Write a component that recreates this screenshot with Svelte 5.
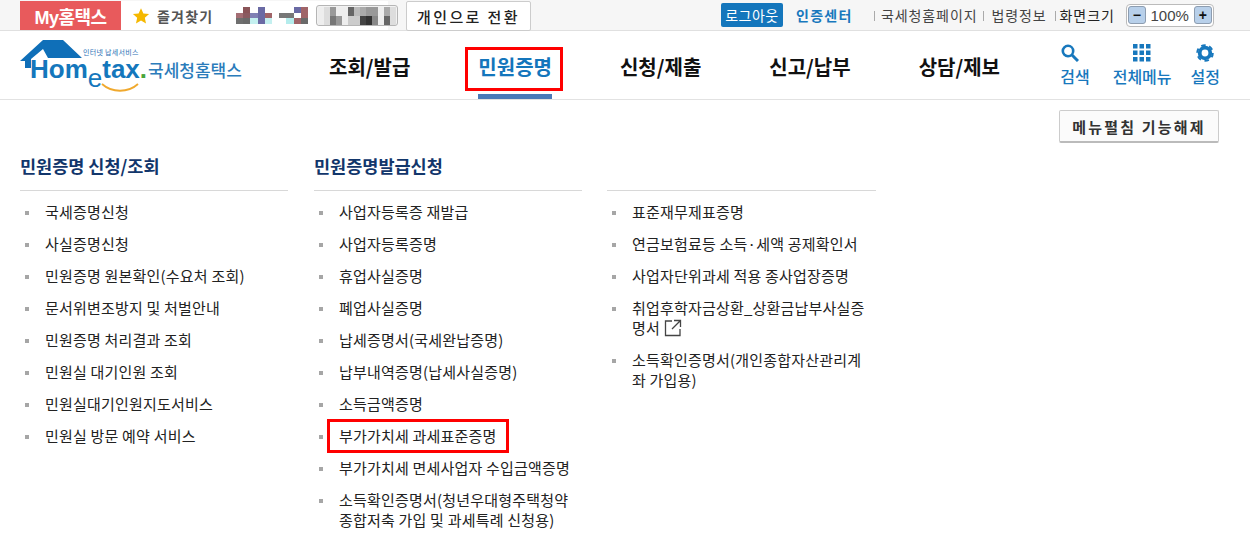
<script>
  // blurred account name, drawn as blocks like in the capture
  const mosaic = [
    '#fff', '#8a5458', '#fff', '#6a6aa4', '#fff', '#fff', '#fff', '#fff', '#6a6aa4', '#a06468',
    '#a46e74', '#8a5a60', '#8080b4', '#6a6aa4', '#a06468', '#fff', '#777', '#777', '#fff', '#a06468',
    '#6f6f6f', '#6a6a6a', '#c4f0f0', '#6a6aa4', '#c4f0f0', '#fff', '#fff', '#b4ecec', '#a06468', '#6a6a6a'
  ]
  const chip = [
    '#eee', '#ddd', '#999', '#eee', '#eee', '#666', '#bbb', '#aaa', '#999', '#999', '#eee', '#aaa', '#ddd',
    '#eee', '#ddd', '#777', '#999', '#eee', '#ccc', '#ccc', '#444', '#333', '#888', '#eee', '#666', '#ddd'
  ]
  const nav = ['조회/발급', '민원증명', '신청/제출', '신고/납부', '상담/제보']
  const columns = [
    {
      title: '민원증명 신청/조회',
      items: ['국세증명신청', '사실증명신청', '민원증명 원본확인(수요처 조회)', '문서위변조방지 및 처벌안내', '민원증명 처리결과 조회', '민원실 대기인원 조회', '민원실대기인원지도서비스', '민원실 방문 예약 서비스']
    },
    {
      title: '민원증명발급신청',
      items: ['사업자등록증 재발급', '사업자등록증명', '휴업사실증명', '폐업사실증명', '납세증명서(국세완납증명)', '납부내역증명(납세사실증명)', '소득금액증명', '부가가치세 과세표준증명', '부가가치세 면세사업자 수입금액증명', '소득확인증명서(청년우대형주택청약\n종합저축 가입 및 과세특례 신청용)']
    },
    {
      title: '',
      items: ['표준재무제표증명', '연금보험료등 소득·세액 공제확인서', '사업자단위과세 적용 종사업장증명', '취업후학자금상환_상환금납부사실증\n명서', '소득확인증명서(개인종합자산관리계\n좌 가입용)']
    }
  ]
</script>

<div class="page">
  <div class="topbar">
    <a class="my">My홈택스</a>
    <a class="fav">
      <svg width="18" height="18" viewBox="0 0 24 24"><path fill="#f5b800" d="M12 1.500l3.200 7 7.600.8-5.700 5.100 1.600 7.500L12 18l-6.700 3.900 1.600-7.500L1.200 9.300l7.600-.8z"/></svg>
      즐겨찾기
    </a>
    <div class="who">
      <div class="pixels">
        {#each mosaic as c}
          <i style="background:{c}"></i>
        {/each}
      </div>
      <div class="chip">
        {#each chip as c}
          <i style="background:{c}"></i>
        {/each}
      </div>
    </div>
    <button class="switch">개인으로 전환</button>
    <div class="util">
      <a class="logout">로그아웃</a>
      <a class="cert">인증센터</a>
      <a class="link first">국세청홈페이지</a>
      <a class="link second">법령정보</a>
      <span class="link third">화면크기</span>
      <div class="zoom">
        <span class="zbtn">−</span>
        <span class="pct">100%</span>
        <span class="zbtn">+</span>
      </div>
    </div>
  </div>

  <header>
    <div class="logo">
      <svg class="roof" width="64" height="30" viewBox="0 0 64 30"><path fill="#0f6fb8" d="M0 21L23 0h20l19 18H28l-5-9L11 19v9H5v-7z"/></svg>
      <span class="tagline">인터넷 납세서비스</span>
      <span class="wordmark">Hom<em>e</em>tax<b>.</b></span>
      <span class="logo-ko">국세청홈택스</span>
      <svg class="smile" width="38" height="9" viewBox="0 0 38 9"><path d="M1 1c10 9 26 9 36 0" fill="none" stroke="#f0a92e" stroke-width="1.800"/></svg>
    </div>
    <nav>
      {#each nav as n, i}
        <a class:active={i === 1}>{n}</a>
      {/each}
    </nav>
    <div class="tools">
      <a class="search">
        <svg width="18" height="18" viewBox="0 0 18 18"><circle cx="7" cy="7" r="5.200" fill="none" stroke="#1878bd" stroke-width="2.600"/><path d="M10.500 10.500L17 17" stroke="#1878bd" stroke-width="3"/></svg>
        검색
      </a>
      <a>
        <svg width="18" height="18" viewBox="0 0 18 18" fill="#1878bd">
          {#each [0, 6.500, 13] as y}
            {#each [0, 6.500, 13] as x}
              <rect {x} {y} width="4.500" height="4.500"/>
            {/each}
          {/each}
        </svg>
        전체메뉴
      </a>
      <a class="gear">
        <svg width="18" height="18" viewBox="0 0 18 18" fill="none" stroke="#1878bd"><circle cx="9" cy="9" r="5.300" stroke-width="3.800"/><circle cx="9" cy="9" r="7.800" stroke-width="2" stroke-dasharray="4.500 3.670"/></svg>
        설정
      </a>
    </div>
  </header>

  <div class="actions">
    <button class="unfold">메뉴펼침 기능해제</button>
  </div>

  <main>
    {#each columns as col}
      <section>
        <h3>{col.title}</h3>
        <ul>
          {#each col.items as item}
            <li>
              {#if item === '부가가치세 과세표준증명'}
                <span class="marked">{item}</span>
              {:else}
                {item}
              {/if}
              {#if item.startsWith('취업후')}
                <svg class="ext" width="18" height="18" viewBox="0 0 18 18"><path d="M8 2H1.500v14.500H16V10M10 1.500h6.500V8M16 2L8 10" fill="none" stroke="#444" stroke-width="1.300"/></svg>
              {/if}
            </li>
          {/each}
        </ul>
      </section>
    {/each}
  </main>
</div>

<style>
  :global(body) {
    background: #fff;
  }
  .page {
    width: 1250px;
    height: 553px;
    overflow: hidden;
    font-family: "Noto Sans CJK KR", "Liberation Sans", sans-serif;
    color: #222;
  }
  a {
    color: inherit;
    text-decoration: none;
  }
  button {
    font-family: inherit;
    cursor: pointer;
  }

  .topbar {
    height: 30px;
    padding-left: 20px;
    display: flex;
    background: #f6f6f6;
    border-bottom: 1px solid #e0e0e0;
  }
  .my {
    width: 101px;
    height: 29px;
    margin-top: 1px;
    display: flex;
    align-items: center;
    justify-content: center;
    background: #e85a5c;
    color: #fff;
    font: bold 18px "Liberation Sans", "Noto Sans CJK KR", sans-serif;
    letter-spacing: -0.5px;
    white-space: nowrap;
  }
  .fav {
    width: 103px;
    height: 29px;
    margin-top: 1px;
    display: flex;
    align-items: center;
    gap: 7px;
    padding-left: 11px;
    background: #fff;
    box-sizing: border-box;
    font-size: 14px;
    font-weight: 700;
    color: #555;
    letter-spacing: 1.200px;
    white-space: nowrap;
  }
  .who {
    width: 174px;
    height: 29px;
    display: flex;
    align-items: center;
    padding-left: 12px;
    box-sizing: border-box;
    margin-top: 1px;
    background: linear-gradient(to right, #fff 164px, #f6f6f6 164px);
  }
  .pixels {
    display: grid;
    grid-template-columns: repeat(10, 1fr);
    grid-auto-rows: 5.400px;
    width: 72px;
    margin-right: 8px;
    flex-shrink: 0;
  }
  .chip {
    display: grid;
    grid-template-columns: repeat(13, 1fr);
    grid-auto-rows: 9px;
    width: 82px;
    height: 21px;
    padding: 1px;
    box-sizing: border-box;
    background: #f2f2f2;
    border: 1px solid #b5b5b5;
    border-radius: 3px;
    flex-shrink: 0;
  }
  .switch {
    width: 125px;
    height: 30px;
    margin: 1px 0 0 8px;
    padding: 0;
    background: #fff;
    border: 1px solid #ccc;
    border-radius: 2px;
    font-size: 15px;
    font-weight: 500;
    letter-spacing: 2.400px;
    color: #222;
  }
  .util {
    display: flex;
    align-items: center;
    margin-left: 190px;
    height: 30px;
  }
  .logout {
    width: 62px;
    height: 24px;
    line-height: 24px;
    text-align: center;
    background: #1476bc;
    color: #fff;
    border-radius: 2px;
    font-size: 14px;
    letter-spacing: 0.5px;
    white-space: nowrap;
  }
  .cert {
    margin-left: 13px;
    color: #1878bd;
    font-weight: 700;
    width: 78px;
    font-size: 14px;
    letter-spacing: 1.300px;
    white-space: nowrap;
  }
  .link {
    color: #444;
    font-size: 14px;
    letter-spacing: 0.9px;
    position: relative;
    white-space: nowrap;
  }
  .link::before {
    content: "";
    position: absolute;
    left: 0;
    top: 6px;
    height: 10px;
    width: 1px;
    background: #aaa;
  }
  .first {
    padding-left: 7px;
  }
  .second {
    margin-left: 6px;
    padding-left: 8px;
  }
  .third {
    margin-left: 8px;
    padding-left: 5px;
    color: #222;
  }
  .zoom {
    display: flex;
    align-items: center;
    justify-content: space-between;
    width: 88px;
    height: 23px;
    margin-left: 11px;
    padding: 0 1px;
    box-sizing: border-box;
    border: 1px solid #bbb;
    border-radius: 4px;
    background: #fff;
  }
  .zbtn {
    width: 18px;
    height: 18px;
    font: bold 14px/16px "Liberation Sans", sans-serif;
    text-align: center;
    color: #111;
    background: #b8d0ea;
    border: 1px solid #8d9db0;
    border-radius: 3px;
    box-sizing: border-box;
  }
  .pct {
    font: 15px "Liberation Sans", sans-serif;
    color: #444;
  }

  header {
    height: 68px;
    display: flex;
    border-bottom: 1px solid #e2e2e2;
    position: relative;
  }
  .logo {
    position: relative;
    width: 329px;
    flex-shrink: 0;
  }
  .roof {
    position: absolute;
    left: 20px;
    top: 9px;
  }
  .tagline {
    position: absolute;
    left: 83px;
    top: 17px;
    font-size: 7px;
    color: #2a6fb5;
    line-height: 9px;
    letter-spacing: 0.3px;
    white-space: nowrap;
  }
  .wordmark {
    position: absolute;
    left: 30px;
    top: 27px;
    font: bold 26px/22px "Liberation Sans", sans-serif;
    color: #1477bc;
    white-space: nowrap;
  }
  .wordmark em {
    font-style: normal;
    font-weight: 400;
    position: relative;
    top: 9px;
  }
  .wordmark b {
    color: #4aa53a;
  }
  .logo-ko {
    position: absolute;
    left: 148px;
    top: 27px;
    font-size: 17px;
    line-height: 24px;
    font-weight: 500;
    color: #2b7cbb;
    white-space: nowrap;
  }
  .smile {
    position: absolute;
    left: 101px;
    top: 52px;
  }
  nav {
    display: flex;
    gap: 68px;
    align-items: flex-start;
  }
  nav a {
    font-size: 20px;
    font-weight: 700;
    line-height: 30px;
    margin-top: 21px;
    color: #111;
    white-space: nowrap;
    position: relative;
  }
  nav a.active {
    color: #1476bc;
  }
  nav a.active::before {
    content: "";
    position: absolute;
    inset: -5px -11px -9px -13px;
    border: 3px solid #f00;
  }
  nav a.active::after {
    content: "";
    position: absolute;
    left: 0;
    right: 0;
    top: 42px;
    height: 5px;
    background: #4a7ab8;
  }
  .tools {
    display: flex;
    position: absolute;
    right: 30px;
    top: 13px;
    gap: 23px;
    color: #1878bd;
    font-size: 16px;
  }
  .tools a {
    display: flex;
    flex-direction: column;
    align-items: center;
    gap: 3px;
    white-space: nowrap;
    line-height: 22px;
    font-weight: 500;
  }
  .tools svg {
    display: block;
  }
  .tools .search svg {
    margin-right: 10px;
  }
  .tools .gear {
    margin-left: -4px;
  }

  .actions {
    display: flex;
    justify-content: flex-end;
    padding: 10px 31px 0 0;
  }
  .unfold {
    width: 160px;
    height: 33px;
    padding: 0;
    background: #fbfbfb;
    border: 1px solid #ccc;
    border-bottom: 2px solid #bbb;
    border-radius: 2px;
    font-size: 15px;
    font-weight: 700;
    letter-spacing: 2.200px;
    color: #333;
    white-space: nowrap;
  }

  main {
    display: flex;
    gap: 26px;
    padding: 8px 0 0 20px;
  }
  section {
    width: 268px;
  }
  section:last-child {
    margin-left: -1px;
    width: 269px;
  }
  h3 {
    height: 40px;
    margin: 0;
    box-sizing: border-box;
    border-bottom: 1px solid #d8d8d8;
    color: #12366b;
    font-size: 17.500px;
    font-weight: 700;
    line-height: 30px;
  }
  ul {
    list-style: none;
    margin: 0;
    padding: 5px 0 0;
  }
  li {
    position: relative;
    padding: 6px 0 6px 25px;
    font-size: 15px;
    line-height: 20px;
    letter-spacing: 0.2px;
    color: #222;
    white-space: pre-line;
  }
  li::before {
    content: "";
    position: absolute;
    left: 5px;
    top: 15px;
    width: 4px;
    height: 4px;
    background: #a6a6a6;
  }
  .marked {
    display: inline-block;
    outline: 3px solid #f00;
    padding: 4px 9px;
    margin: -4px -9px;
  }
  .ext {
    vertical-align: -3px;
  }
</style>
